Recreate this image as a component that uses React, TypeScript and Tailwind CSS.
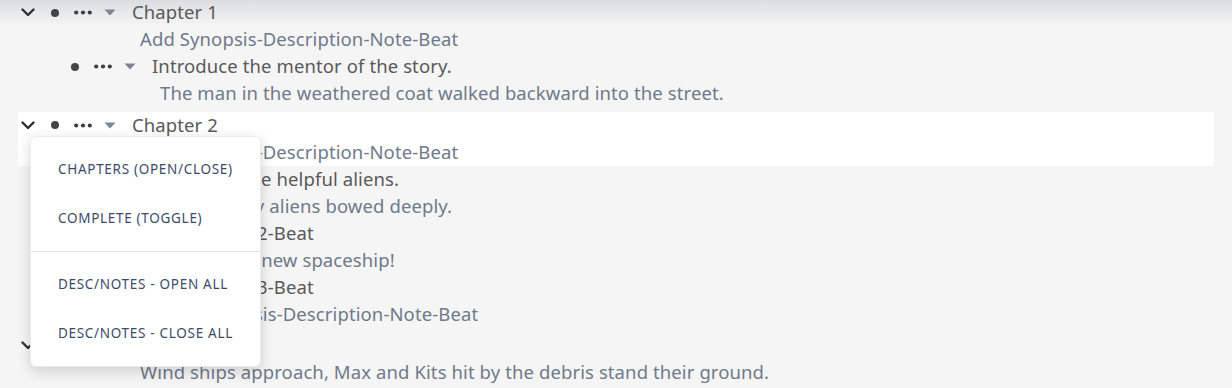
import React from "react";

type Row =
  | { kind: "desc"; text: string; level: 0 | 1 }
  | { kind: "beat"; text: string };

type Chapter = { title: string; rows: Row[]; active?: boolean };

const chapters: Chapter[] = [
  {
    title: "Chapter 1",
    rows: [
      { kind: "desc", level: 0, text: "Add Synopsis-Description-Note-Beat" },
      { kind: "beat", text: "Introduce the mentor of the story." },
      { kind: "desc", level: 1, text: "The man in the weathered coat walked backward into the street." },
    ],
  },
  {
    title: "Chapter 2",
    active: true,
    rows: [
      { kind: "desc", level: 0, text: "Add Synopsis-Description-Note-Beat" },
      { kind: "beat", text: "Introduce the helpful aliens." },
      { kind: "desc", level: 1, text: "The friendly aliens bowed deeply." },
      { kind: "beat", text: "Action Beat 2-Beat" },
      { kind: "desc", level: 1, text: "They find a new spaceship!" },
      { kind: "beat", text: "Action Beat 3-Beat" },
      { kind: "desc", level: 1, text: "Add Synopsis-Description-Note-Beat" },
    ],
  },
  {
    title: "Chapter 3",
    rows: [
      { kind: "desc", level: 0, text: "Wind ships approach, Max and Kits hit by the debris stand their ground." },
    ],
  },
];

const menuItems = [
  ["CHAPTERS (OPEN/CLOSE)", "COMPLETE (TOGGLE)"],
  ["DESC/NOTES - OPEN ALL", "DESC/NOTES - CLOSE ALL"],
];

function Chevron() {
  return (
    <svg width="14" height="9" viewBox="0 0 14 9" fill="none">
      <path d="M1.5 1.5 L7 7 L12.5 1.5" stroke="#2f2f2f" strokeWidth="2.4" strokeLinecap="round" strokeLinejoin="round" />
    </svg>
  );
}

function Dots() {
  return (
    <svg width="18" height="5" viewBox="0 0 18 5">
      <circle cx="2.2" cy="2.5" r="2.1" fill="#3d3d3d" />
      <circle cx="9" cy="2.5" r="2.1" fill="#3d3d3d" />
      <circle cx="15.8" cy="2.5" r="2.1" fill="#3d3d3d" />
    </svg>
  );
}

function Caret() {
  return (
    <svg width="12" height="7" viewBox="0 0 12 7">
      <path d="M0.5 0.5 H11.5 L6 6.5 Z" fill="#7b8594" />
    </svg>
  );
}

function Handle({ chevron }: { chevron: boolean }) {
  return (
    <div className="flex items-center h-full">
      <div className="w-[19px] flex justify-center">{chevron && <Chevron />}</div>
      <div className="w-[36px] flex justify-center">
        <span className="block w-[8px] h-[8px] rounded-full bg-[#454545]" />
      </div>
      <div className="w-[20px] flex justify-center">
        <Dots />
      </div>
      <div className="w-[34px] flex justify-center">
        <Caret />
      </div>
    </div>
  );
}

export default function App() {
  return (
    <div
      className="relative w-[1232px] h-[388px] overflow-hidden bg-[#f5f5f5] text-[18.5px] tracking-[0.1px]"
      style={{ fontFamily: '"Noto Sans", "Open Sans", sans-serif' }}
    >
      <div className="pointer-events-none absolute inset-x-0 top-0 h-[26px] bg-gradient-to-b from-[#dcdde0] to-[#f5f5f5]/0" />

      <div className="relative px-[18px] -mt-[1px] flex flex-col gap-[4.5px]">
        {chapters.map((ch) => (
          <div key={ch.title}>
            <div className={ch.active ? "bg-white" : ""}>
              <div className="h-[27px] flex items-center">
                <Handle chevron />
                <span className="ml-[5px] text-[#595959] leading-none">{ch.title}</span>
              </div>
              {ch.rows.slice(0, 1).map((r, i) => (
                <div key={i} className="h-[27px] flex items-center pl-[122px] text-[#6f7a8a] leading-none whitespace-nowrap">
                  {r.text}
                </div>
              ))}
            </div>
            <div>
              {ch.rows.slice(1).map((r, i) =>
                r.kind === "beat" ? (
                  <div key={i} className="h-[27px] flex items-center pl-[20px]">
                    <Handle chevron={false} />
                    <span className="ml-[5px] text-[#595959] leading-none whitespace-nowrap">{r.text}</span>
                  </div>
                ) : (
                  <div
                    key={i}
                    className={`h-[27px] flex items-center text-[#6f7a8a] leading-none whitespace-nowrap ${
                      r.level === 1 ? "pl-[142px]" : "pl-[122px]"
                    }`}
                  >
                    {r.text}
                  </div>
                )
              )}
            </div>
          </div>
        ))}
      </div>

      <div className="absolute left-[30px] top-[136px] w-[231px] z-20 rounded-[6px] bg-white py-2 shadow-[0_4px_14px_rgba(0,0,0,0.16)] border border-[#ececec]">
        {menuItems.map((group, gi) => (
          <div key={gi} className={gi > 0 ? "border-t border-[#e3e3e3] mt-2 pt-2" : ""}>
            {group.map((label) => (
              <div key={label} className="h-[49px] flex items-center pl-[27px] text-[13.5px] tracking-[0.7px] text-[#3b4b6a]">
                {label}
              </div>
            ))}
          </div>
        ))}
      </div>
    </div>
  );
}
